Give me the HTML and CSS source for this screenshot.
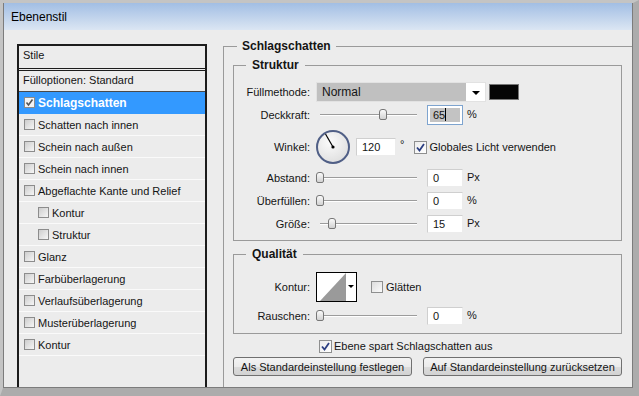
FILE: index.html
```html
<!DOCTYPE html>
<html lang="de">
  <head>
    <meta charset="UTF-8" />
    <meta name="viewport" content="width=device-width, initial-scale=1.0" />
    <title>Ebenenstil</title>
    <link rel="stylesheet" href="styles.css">
  </head>

  <body>
    <div class="window">
      <div class="inner">
        <div class="titlebar">Ebenenstil</div>

        <div class="content">
          <!-- Liste der Stile -->
          <div class="styles-list">
            <div class="list-head">Stile</div>
            <div class="list-fill">Fülloptionen: Standard</div>
            <div class="row selected"><span class="cb on"><svg width="9" height="9" viewBox="0 0 9 9"><path d="M1.5 4.5 L3.5 7 L7.5 1.5" fill="none" stroke="#555" stroke-width="1.6"/></svg></span>Schlagschatten</div>
            <div class="row"><span class="cb"></span>Schatten nach innen</div>
            <div class="row"><span class="cb"></span>Schein nach außen</div>
            <div class="row"><span class="cb"></span>Schein nach innen</div>
            <div class="row"><span class="cb"></span>Abgeflachte Kante und Relief</div>
            <div class="row indent"><span class="cb"></span>Kontur</div>
            <div class="row indent"><span class="cb"></span>Struktur</div>
            <div class="row"><span class="cb"></span>Glanz</div>
            <div class="row"><span class="cb"></span>Farbüberlagerung</div>
            <div class="row"><span class="cb"></span>Verlaufsüberlagerung</div>
            <div class="row"><span class="cb"></span>Musterüberlagerung</div>
            <div class="row"><span class="cb"></span>Kontur</div>
          </div>

          <!-- Einstellungen -->
          <div class="settings">
            <fieldset class="group main">
              <legend>Schlagschatten</legend>

              <fieldset class="group sub struct">
                <legend>Struktur</legend>

                <div class="f-row h20">
                  <span class="lbl">Füllmethode:</span>
                  <div class="select">
                    <span class="select-value">Normal</span>
                    <span class="select-arrow"></span>
                  </div>
                  <span class="swatch"></span>
                </div>

                <div class="f-row h20 gap3">
                  <span class="lbl">Deckkraft:</span>
                  <div class="slider"><div class="track"><span class="thumb" style="left: 65%"></span></div></div>
                  <div class="field focus"><span class="sel">65<i class="caret"></i></span></div>
                  <span class="unit">%</span>
                </div>

                <div class="f-row h34 gap5">
                  <span class="lbl">Winkel:</span>
                  <svg class="dial" width="34" height="34" viewBox="0 0 34 34">
                    <defs>
                      <radialGradient id="dialfill" cx="40%" cy="35%" r="70%">
                        <stop offset="0" stop-color="#fbfbfb"/>
                        <stop offset="1" stop-color="#dedede"/>
                      </radialGradient>
                    </defs>
                    <circle cx="17" cy="17" r="16" fill="url(#dialfill)" stroke="#505f86" stroke-width="2"/>
                    <line x1="17" y1="17" x2="9.5" y2="4" stroke="#000" stroke-width="1.2"/>
                    <circle cx="17" cy="17" r="1.6" fill="#000"/>
                  </svg>
                  <span class="field wide">120</span>
                  <span class="deg">°</span>
                  <span class="check on light-gap"><svg width="11" height="11" viewBox="0 0 11 11"><path d="M2 5.5 L4.5 8.5 L9 2" fill="none" stroke="#2c3f82" stroke-width="1.8"/></svg></span>
                  <span class="check-text">Globales Licht verwenden</span>
                </div>

                <div class="f-row h18 gap5">
                  <span class="lbl">Abstand:</span>
                  <div class="slider"><div class="track"><span class="thumb" style="left: 0%"></span></div></div>
                  <span class="field">0</span>
                  <span class="unit">Px</span>
                </div>

                <div class="f-row h18 gap5">
                  <span class="lbl">Überfüllen:</span>
                  <div class="slider"><div class="track"><span class="thumb" style="left: 0%"></span></div></div>
                  <span class="field">0</span>
                  <span class="unit">%</span>
                </div>

                <div class="f-row h18 gap5">
                  <span class="lbl">Größe:</span>
                  <div class="slider"><div class="track"><span class="thumb" style="left: 12%"></span></div></div>
                  <span class="field">15</span>
                  <span class="unit">Px</span>
                </div>
              </fieldset>

              <fieldset class="group sub quality">
                <legend>Qualität</legend>

                <div class="f-row h30">
                  <span class="lbl">Kontur:</span>
                  <div class="curve">
                    <svg width="29" height="28" viewBox="0 0 29 28"><polygon points="3,28 29,0 29,28" fill="#9a9a9a"/></svg>
                    <span class="curve-arrow"></span>
                  </div>
                  <span class="check smooth"></span>
                  <span class="check-text">Glätten</span>
                </div>

                <div class="f-row h18 gap5">
                  <span class="lbl">Rauschen:</span>
                  <div class="slider"><div class="track"><span class="thumb" style="left: 0%"></span></div></div>
                  <span class="field">0</span>
                  <span class="unit">%</span>
                </div>
              </fieldset>

              <div class="knockout">
                <span class="check on"><svg width="11" height="11" viewBox="0 0 11 11"><path d="M2 5.5 L4.5 8.5 L9 2" fill="none" stroke="#2c3f82" stroke-width="1.8"/></svg></span>
                <span class="check-text">Ebene spart Schlagschatten aus</span>
              </div>

              <div class="buttons">
                <button type="button" class="btn first">Als Standardeinstellung festlegen</button>
                <button type="button" class="btn second">Auf Standardeinstellung zurücksetzen</button>
              </div>
            </fieldset>
          </div>
        </div>
      </div>
    </div>
  </body>
</html>
```

FILE: styles.css
```css
/* Grundeinstellungen */
* {
  box-sizing: border-box;
  margin: 0;
  padding: 0;
}

body {
  font-family: "Liberation Sans", Arial, sans-serif;
  font-size: 11px;
  color: #141414;
  background: #b9b9b9;
}

/* Fensterrahmen */
.window {
  width: 639px;
  height: 396px;
  border-style: solid;
  border-width: 3px 6px 8px 3px;
  border-color: #c4c4c4 #acacac #acacac #c4c4c4;
}

.inner {
  height: 100%;
  border: 1px solid #7c7c7c;
  border-top: 0;
  display: flex;
  flex-direction: column;
}

.titlebar {
  height: 27px;
  line-height: 29px;
  padding-left: 7px;
  font-size: 12px;
  color: #000;
  background: linear-gradient(#a2bee4, #dbe6f3);
}

.content {
  flex: 1;
  display: flex;
  padding: 14px 0 0 13px;
  background: #ececec;
}

/* Stilliste links */
.styles-list {
  width: 190px;
  border: 2px solid #1c1c1c;
  border-bottom: 0;
}

.list-head {
  height: 25px;
  line-height: 18px;
  padding-left: 4px;
  border-bottom: 3px double #1c1c1c;
}

.list-fill {
  height: 21px;
  line-height: 19px;
  padding-left: 4px;
  border-bottom: 1px solid #4a4a4a;
}

.row {
  height: 22px;
  display: flex;
  align-items: center;
  padding-left: 5px;
  border-bottom: 1px solid #fafafa;
}

.row.indent {
  padding-left: 19px;
}

.row.selected {
  background: #3399ff;
  border-bottom-color: #3399ff;
  color: #fff;
  font-weight: bold;
  font-size: 12px;
}

.cb {
  width: 11px;
  height: 11px;
  margin-right: 3px;
  border: 1px solid #8c8c8c;
  background: linear-gradient(135deg, #cdcdcd, #f6f6f6);
  display: flex;
  align-items: center;
  justify-content: center;
}

.cb.on {
  background: #f4f4f4;
}

/* Einstellungen rechts */
.settings {
  flex: 1;
  margin: -5px 0 0 16px;
}

.group {
  border: 1px solid #9a9a9a;
  min-width: 0;
}

.group legend {
  font-weight: bold;
  font-size: 12px;
  line-height: 14px;
  color: #141414;
}

.main {
  height: 100%;
  border-right: 0;
  border-bottom: 0;
  padding: 5px 10px 0 9px;
}

.main > legend {
  margin-left: 4px;
  padding: 0 5px;
}

.sub > legend {
  margin-left: 12px;
  padding: 0 6px;
}

.struct {
  padding: 10px 0 7px 0;
}

.quality {
  margin-top: 6px;
  padding: 11px 0 8px 0;
}

/* Zeilen */
.f-row {
  display: flex;
  align-items: center;
}

.h18 { height: 18px; }
.h20 { height: 20px; }
.h30 { height: 30px; }
.h34 { height: 34px; }
.gap3 { margin-top: 3px; }
.gap5 { margin-top: 5px; }

.lbl {
  width: 76px;
  margin-right: 6px;
  text-align: right;
}

/* Auswahlfeld */
.select {
  width: 170px;
  height: 20px;
  display: flex;
  border: 1px solid #e2e2e2;
  background: #fff;
}

.select-value {
  flex: 1;
  background: #c0c0c0;
  padding-left: 5px;
  line-height: 18px;
  font-size: 12px;
}

.select-arrow {
  width: 19px;
  position: relative;
}

.select-arrow::after {
  content: "";
  position: absolute;
  left: 6px;
  top: 8px;
  border-left: 4px solid transparent;
  border-right: 4px solid transparent;
  border-top: 4px solid #000;
}

.swatch {
  width: 30px;
  height: 16px;
  margin-left: 3px;
  background: #050505;
  border: 1px solid #777;
}

/* Schieberegler */
.slider {
  width: 101px;
  margin-right: 10px;
  padding-left: 4px;
}

.track {
  position: relative;
  height: 2px;
  border-top: 1px solid #9c9c9c;
  border-bottom: 1px solid #fff;
}

.thumb {
  position: absolute;
  top: -6px;
  width: 8px;
  height: 11px;
  margin-left: -4px;
  border: 1px solid #777;
  border-radius: 3px 3px 2px 2px;
  background: linear-gradient(#fafafa, #d2d2d2);
}

/* Eingabefelder */
.field {
  width: 36px;
  height: 18px;
  padding-left: 5px;
  line-height: 17px;
  background: #fff;
  border: 1px solid;
  border-color: #cfcfcf #ececec #ececec #cfcfcf;
}

.field.wide {
  width: 40px;
  margin-left: 6px;
}

.field.focus {
  height: 20px;
  padding: 2px;
  border: 1px solid #7ea4cf;
}

.sel {
  display: block;
  height: 100%;
  padding-left: 3px;
  line-height: 14px;
  background: #c3c3c3;
}

.caret {
  display: inline-block;
  width: 1px;
  height: 13px;
  background: #000;
  vertical-align: -2px;
}

.unit {
  margin-left: 4px;
  margin-top: -2px;
}

.deg {
  margin-left: 4px;
  margin-top: -6px;
}

/* Kontrollkästchen */
.check {
  width: 13px;
  height: 13px;
  border: 1px solid #8e8f8f;
  background: linear-gradient(135deg, #dcdcdc, #fbfbfb);
  display: flex;
  align-items: center;
  justify-content: center;
}

.check.on {
  background: linear-gradient(135deg, #ececec, #ffffff);
}

.light-gap {
  margin-left: 10px;
}

.check-text {
  margin-left: 2px;
}

.check.smooth {
  width: 12px;
  height: 12px;
  margin-left: 14px;
}

.smooth + .check-text {
  margin-left: 3px;
}

/* Konturvorschau */
.curve {
  width: 41px;
  height: 30px;
  display: flex;
  border: 1px solid #000;
  background: #fff;
}

.curve-arrow {
  width: 10px;
  position: relative;
}

.curve-arrow::after {
  content: "";
  position: absolute;
  left: 2px;
  top: 12px;
  border-left: 3px solid transparent;
  border-right: 3px solid transparent;
  border-top: 3px solid #000;
}

/* Ebene spart aus */
.knockout {
  height: 14px;
  margin-top: 5px;
  padding-left: 86px;
  display: flex;
  align-items: center;
}

/* Schaltflächen */
.buttons {
  display: flex;
  margin-top: 4px;
  gap: 11px;
}

.btn {
  height: 19px;
  font-family: "Liberation Sans", Arial, sans-serif;
  font-size: 11px;
  color: #141414;
  border: 1px solid #707070;
  border-radius: 3px;
  background: linear-gradient(#f3f3f3 0%, #ebebeb 50%, #dcdcdc 51%, #d2d2d2 100%);
}

.first {
  width: 179px;
}

.second {
  width: 199px;
}
```
